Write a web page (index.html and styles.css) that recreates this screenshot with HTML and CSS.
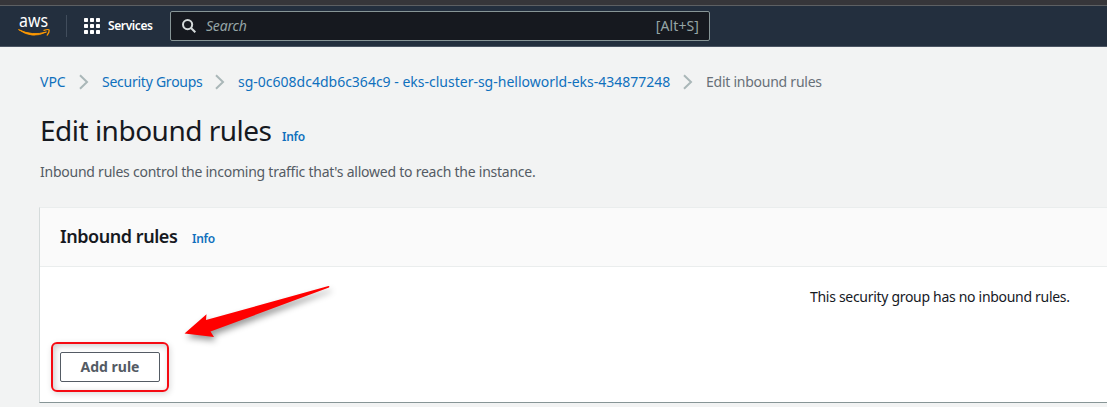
FILE: index.html
```
<!DOCTYPE html>
<html lang="en">
<head>
<meta charset="utf-8">
<title>Edit inbound rules</title>
<link rel="stylesheet" href="styles.css">
</head>
<body>
<div class="browser-edge"></div>
<header class="topnav">
  <svg class="logo" width="34" height="26" viewBox="0 0 34 26" role="img" aria-label="aws">
    <text class="logo-text" x="1" y="14.300" textLength="29" lengthAdjust="spacingAndGlyphs">aws</text>
    <path d="M.5 16.600Q14 26.300 28.500 19Q14 23.300 .5 16.600Z" fill="#f90" stroke="#f90" stroke-width=".9" stroke-linejoin="round"/>
    <path d="M26 17.300Q30.500 15.900 31.200 17Q31.300 19.800 29.200 22.100" fill="none" stroke="#f90" stroke-width="1.3" stroke-linecap="round" stroke-linejoin="round"/>
  </svg>
  <div class="divider"></div>
  <div class="services">
    <svg width="16" height="16" viewBox="0 0 16 16" fill="#fff">
      <rect width="4" height="4" rx=".7"/><rect x="6" width="4" height="4" rx=".7"/><rect x="12" width="4" height="4" rx=".7"/>
      <rect y="6" width="4" height="4" rx=".7"/><rect x="6" y="6" width="4" height="4" rx=".7"/><rect x="12" y="6" width="4" height="4" rx=".7"/>
      <rect y="12" width="4" height="4" rx=".7"/><rect x="6" y="12" width="4" height="4" rx=".7"/><rect x="12" y="12" width="4" height="4" rx=".7"/>
    </svg>
    <span class="services-label">Services</span>
  </div>
  <div class="search">
    <svg width="14" height="14" viewBox="0 0 14 14" fill="none" stroke="#d5dbdb" stroke-width="2">
      <circle cx="5.600" cy="5.600" r="4.600"/><path d="M9 9L13.300 13.300"/>
    </svg>
    <span class="search-text">Search</span>
    <span class="search-key">[Alt+S]</span>
  </div>
</header>
<main class="page">
  <nav class="crumbs">
    <a class="crumb vpc">VPC</a>
    <svg class="chevron" width="10" height="16" viewBox="0 0 10 16"><path d="M1 1.200L8 8L1 14.800"/></svg>
    <a class="crumb groups">Security Groups</a>
    <svg class="chevron" width="10" height="16" viewBox="0 0 10 16"><path d="M1 1.200L8 8L1 14.800"/></svg>
    <a class="crumb group-id">sg-0c608dc4db6c364c9 - eks-cluster-sg-helloworld-eks-434877248</a>
    <svg class="chevron" width="10" height="16" viewBox="0 0 10 16"><path d="M1 1.200L8 8L1 14.800"/></svg>
    <span class="crumb current">Edit inbound rules</span>
  </nav>
  <div class="heading">
    <h1 class="title">Edit inbound rules</h1>
    <a class="info">Info</a>
  </div>
  <p class="description">Inbound rules control the incoming traffic that's allowed to reach the instance.</p>
  <section class="panel">
    <div class="panel-head">
      <h2 class="panel-title">Inbound rules</h2>
      <a class="info">Info</a>
    </div>
    <div class="panel-body">
      <p class="empty">This security group has no inbound rules.</p>
      <div class="highlight"><button class="add">Add rule</button></div>
    </div>
  </section>
</main>
<svg class="arrow" width="160" height="70" viewBox="180 275 160 70">
  <path d="M184.500 333.500L206.500 314.300L206 320L328.500 286Q330 286.500 329 287.500L210.500 331.500L214 337Z" fill="#f00"/>
</svg>
</body>
</html>
```
FILE: styles.css
```
* { box-sizing: border-box; }
body {
  margin: 0;
  width: 1107px;
  height: 407px;
  overflow: hidden;
  background: #f2f3f3;
  color: #16191f;
  font: 14px/22px "Noto Sans", sans-serif;
}
h1, h2, p { margin: 0; }
a { color: #0f70bd; }
.browser-edge { height: 6px; background: #36363a; border-bottom: 1px solid #5d6063; }
.topnav {
  display: flex;
  align-items: center;
  height: 41px;
  padding-left: 18px;
  background: #232f3e;
  border-bottom: 1px solid #4b5563;
}
.logo { display: block; overflow: visible; }
.logo-text { fill: #fff; font: 400 18px "Noto Sans", sans-serif; }
.divider { width: 1px; height: 22px; margin-left: 14px; background: #414d5c; }
.services { display: flex; align-items: center; gap: 8px; width: 86px; margin-left: 17px; }
.services-label { color: #fff; font-size: 12px; font-weight: 600; letter-spacing: -.4px; white-space: nowrap; }
.services svg, .search svg { display: block; flex: none; }
.search {
  display: flex;
  align-items: center;
  width: 540px;
  height: 30px;
  padding: 0 10px 0 11px;
  border: 1px solid #879596;
  border-radius: 2px;
  background: #16191f;
  color: #95a5a6;
}
.search-text { margin-left: 10px; font-style: italic; letter-spacing: -.2px; }
.search-key { margin-left: auto; letter-spacing: .1px; }
.page { padding: 24px 0 0 40px; }
.crumbs { display: flex; align-items: center; height: 22px; white-space: nowrap; }
.crumb { letter-spacing: -.25px; }
.vpc { width: 39px; letter-spacing: 0; }
.groups { width: 113px; }
.crumbs .chevron { flex: none; margin-right: 13px; }
.group-id { width: 445px; letter-spacing: 0; }
.current { color: #687078; }
.chevron { fill: none; stroke: #aab7b8; stroke-width: 2; }
.heading { display: flex; align-items: baseline; height: 36px; margin-top: 19px; }
.title { width: 242px; font-size: 28px; font-weight: 400; line-height: 36px; letter-spacing: -.5px; white-space: nowrap; }
.info { font-size: 12px; font-weight: 600; letter-spacing: -.3px; }
.description { margin-top: 13px; color: #545b64; letter-spacing: -.24px; white-space: nowrap; }
.panel {
  height: 196px;
  margin: 24px 0 0 -1px;
  border: 1px solid #d5dbdb;
  border-top-color: #eaeded;
  border-right: 0;
  border-bottom: 1px solid #879596;
  background: #fff;
}
.panel-head { display: flex; align-items: baseline; height: 59px; padding: 13px 0 0 20px; background: #fafafa; border-bottom: 1px solid #eaeded; }
.panel-title { width: 132px; font-size: 18px; line-height: 30px; font-weight: 600; letter-spacing: -.45px; white-space: nowrap; }
.panel-body { padding: 19px 0 0 11px; }
.empty { padding-left: 759px; letter-spacing: -.3px; white-space: nowrap; }
.highlight {
  display: flex;
  align-items: center;
  justify-content: center;
  width: 118px;
  height: 50px;
  margin-top: 34px;
  border: 2px solid #f50a12;
  border-radius: 6px;
  box-shadow: 1px 2px 6px rgba(0,0,0,.15), inset 2px 2px 6px rgba(0,0,0,.2);
}
.add {
  width: 100px;
  height: 30px;
  margin-right: 1px;
  padding: 0 0 0 1px;
  border: 1px solid #545b64;
  border-radius: 2px;
  background: #fff;
  color: #545b64;
  font: 700 14px/20px "Noto Sans", sans-serif;
}
.arrow { position: absolute; left: 180px; top: 275px; filter: drop-shadow(2px 4px 3px rgba(0,0,0,.4)); }
```
